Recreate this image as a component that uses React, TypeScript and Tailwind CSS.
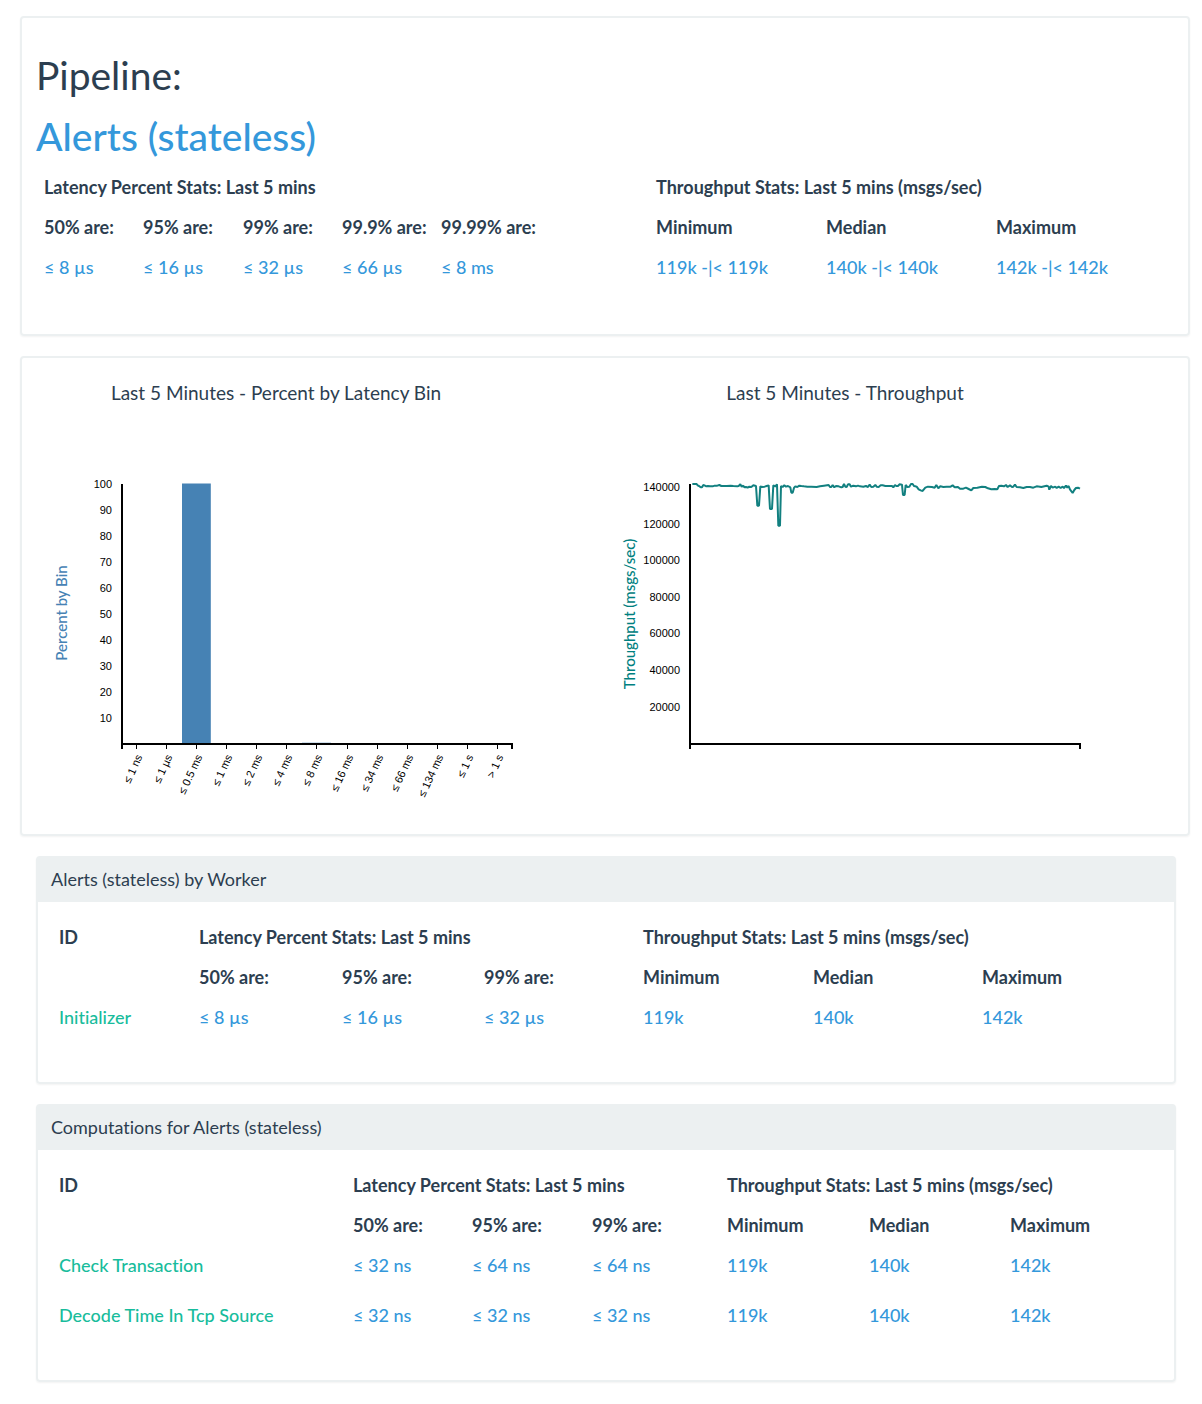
import React from "react";

type Row = { id?: string; values: string[] };

const workerCols = ["w-[140px]", "w-[143px]", "w-[142px]", "w-[159px]", "w-[170px]", "w-[169px]", "w-[187px]"];
const computationCols = ["w-[294px]", "w-[119px]", "w-[120px]", "w-[135px]", "w-[142px]", "w-[141px]", "w-[159px]"];
const pipelineCols = ["w-[99px]", "w-[100px]", "w-[99px]", "w-[99px]", "w-[215px]", "w-[170px]", "w-[170px]", "w-[186px]"];

function StatsTable({
  cols,
  latency,
  rows,
  withId = false,
}: {
  cols: string[];
  latency: string[];
  rows: Row[];
  withId?: boolean;
}) {
  return (
    <table className="w-full table-fixed text-left text-[18px] whitespace-nowrap">
      <colgroup>
        {cols.map((c, i) => (
          <col key={i} className={c} />
        ))}
      </colgroup>
      <thead>
        <tr className="h-10">
          {withId && <th className="px-2 font-bold">ID</th>}
          <th colSpan={latency.length} className="px-2 font-bold">
            Latency Percent Stats: Last 5 mins
          </th>
          <th colSpan={3} className="px-2 font-bold">
            Throughput Stats: Last 5 mins (msgs/sec)
          </th>
        </tr>
        <tr className="h-10">
          {withId && <td />}
          {[...latency, "Minimum", "Median", "Maximum"].map((h) => (
            <th key={h} className="px-2 font-bold">
              {h}
            </th>
          ))}
        </tr>
      </thead>
      <tbody>
        {rows.map((r, i) => (
          <tr key={i} className="h-[50px]">
            {r.id && (
              <td className="px-2 pt-2 align-top leading-6">
                <a href="#" className="font-medium text-[#18bc9c]">
                  {r.id}
                </a>
              </td>
            )}
            {r.values.map((v, j) => (
              <td key={j} className="px-2 pt-2 align-top leading-6 font-medium text-[#3498db]">
                {v}
              </td>
            ))}
          </tr>
        ))}
      </tbody>
    </table>
  );
}

function Panel({ title, children }: { title: string; children: React.ReactNode }) {
  return (
    <section className="mr-3.5 ml-4 rounded-sm border-2 border-[#ecf0f1] shadow-xs">
      <h2 className="h-11 bg-[#ecf0f1] px-[13px] pt-[9px] text-[18px] leading-6">{title}</h2>
      <div className="px-[13px] pt-[15px] pb-[35px]">{children}</div>
    </section>
  );
}

const bins = ["≤ 1 ns", "≤ 1 µs", "≤ 0.5 ms", "≤ 1 ms", "≤ 2 ms", "≤ 4 ms", "≤ 8 ms", "≤ 16 ms", "≤ 34 ms", "≤ 66 ms", "≤ 134 ms", "≤ 1 s", "> 1 s"];
const percents = [100, 90, 80, 70, 60, 50, 40, 30, 20, 10];
const rates = [140000, 120000, 100000, 80000, 60000, 40000, 20000];
const TICK = "fill-black font-['Liberation_Sans',Arial,sans-serif] text-[11px]";

function LatencyChart() {
  return (
    <svg width="480" height="350" className="block" role="img" aria-label="Percent by latency bin">
      <text
        transform="translate(31 143) rotate(-90)"
        textAnchor="middle"
        className="fill-[#4682b4] text-[15px] font-medium"
      >
        Percent by Bin
      </text>
      {percents.map((p, i) => (
        <text key={p} x="76" y={18 + i * 26} textAnchor="end" className={TICK}>
          {p}
        </text>
      ))}
      <rect x="146" y="13.5" width="28.8" height="260" fill="#4682b4" />
      <rect x="266" y="272.5" width="29" height="1" fill="#4682b4" opacity="0.5" />
      <path d="M86 14V279M85 274H477M476 273V279" stroke="#000" strokeWidth="2" fill="none" />
      {bins.map((b, i) => (
        <g key={b} transform={`translate(${100.5 + Math.round(i * 30.08)} 274)`}>
          <path d="M0 0V5" stroke="#000" />
          <text transform="rotate(-65)" x="-9" y="11" textAnchor="end" className={TICK}>
            {b}
          </text>
        </g>
      ))}
    </svg>
  );
}

const trace =
  "37,42 50,42 53,46 57,48 62,52 66,52 70,45 75,47 79,49 84,48 90,49 98,49 104,47 112,47 118,45 124,48 140,48 152,47 160,48 172,49 176,48 181,43 185,50 190,47 193,52 198,51 203,53 208,50 214,51 220,46 228,48 232,107 237,107 241,49 246,51 254,50 260,48 266,46 270,117 276,117 280,46 286,49 291,43 295,167 300,167 303,48 308,51 313,46 318,50 324,48 331,52 334,68 338,68 342,54 346,49 352,51 358,47 364,48 372,49 382,50 394,50 410,51 420,49 432,47 446,45 450,51 454,51 458,45 463,52 468,48 476,49 484,52 488,51 492,42 496,50 500,51 504,43 509,43 513,50 520,47 528,49 534,47 540,49 550,50 558,48 564,51 569,44 574,51 580,50 586,45 590,50 596,51 602,46 608,46 616,48 624,48 636,48 640,52 645,45 649,48 654,48 659,43 666,44 669,75 674,75 677,45 682,51 688,50 693,42 698,42 702,48 706,49 710,50 716,58 722,61 728,63 736,53 744,50 756,51 764,53 769,45 775,55 781,49 790,51 800,50 812,50 818,46 824,52 834,51 840,56 850,56 858,53 866,57 874,61 880,54 892,53 906,50 916,51 924,55 934,58 944,57 952,58 957,48 964,47 972,49 978,45 983,51 990,46 996,51 1000,50 1005,44 1010,51 1020,52 1030,54 1040,51 1050,51 1060,53 1070,49 1080,50 1084,51 1100,47 1106,50 1108,59 1113,48 1118,53 1126,50 1130,54 1136,50 1142,54 1148,50 1152,54 1158,47 1162,53 1166,48 1170,58 1178,69 1183,60 1188,54 1194,53 1200,56";

function ThroughputChart() {
  return (
    <svg width="480" height="350" className="block" role="img" aria-label="Throughput over the last 5 minutes">
      <text
        transform="translate(30 144) rotate(-90)"
        textAnchor="middle"
        className="fill-[#008080] text-[15px] font-medium"
      >
        Throughput (msgs/sec)
      </text>
      {rates.map((r, i) => (
        <text key={r} x="75" y={Math.round(21 + i * 36.6)} textAnchor="end" className={TICK}>
          {r}
        </text>
      ))}
      <path d="M85 14V279M84 274H476M475 273V279" stroke="#000" strokeWidth="2" fill="none" />
      <polyline
        points={trace}
        transform="translate(75 0) scale(0.3333)"
        fill="none"
        stroke="#128080"
        strokeWidth="6"
        strokeLinejoin="bevel"
      />
    </svg>
  );
}

function ChartBlock({ title, children }: { title: string; children: React.ReactNode }) {
  return (
    <div className="w-[480px]">
      <h3 className="mb-[65px] text-center text-[19px] leading-6">{title}</h3>
      {children}
    </div>
  );
}

export default function App() {
  return (
    <main className="flex flex-col gap-5 bg-white pt-4 pr-3 pb-5 pl-5 font-['Lato',sans-serif] leading-6 text-[#2c3e50] [font-variant-ligatures:none]">
      <section className="rounded-sm border-2 border-[#ecf0f1] px-3.5 pt-[27px] pb-[37px] shadow-xs">
        <h1 className="text-[39px] leading-[61px]">
          Pipeline:
          <br />
          <a href="#" className="font-medium text-[#3498db]">
            Alerts (stateless)
          </a>
        </h1>
        <StatsTable
          cols={pipelineCols}
          latency={["50% are:", "95% are:", "99% are:", "99.9% are:", "99.99% are:"]}
          rows={[
            {
              values: ["≤ 8 µs", "≤ 16 µs", "≤ 32 µs", "≤ 66 µs", "≤ 8 ms", "119k -|< 119k", "140k -|< 140k", "142k -|< 142k"],
            },
          ]}
        />
      </section>

      <section className="grid grid-cols-2 rounded-sm border-2 border-[#ecf0f1] px-3.5 pt-[23px] pb-3.5 shadow-xs">
        <ChartBlock title="Last 5 Minutes - Percent by Latency Bin">
          <LatencyChart />
        </ChartBlock>
        <ChartBlock title="Last 5 Minutes - Throughput">
          <ThroughputChart />
        </ChartBlock>
      </section>

      <Panel title="Alerts (stateless) by Worker">
        <StatsTable
          withId
          cols={workerCols}
          latency={["50% are:", "95% are:", "99% are:"]}
          rows={[{ id: "Initializer", values: ["≤ 8 µs", "≤ 16 µs", "≤ 32 µs", "119k", "140k", "142k"] }]}
        />
      </Panel>

      <Panel title="Computations for Alerts (stateless)">
        <StatsTable
          withId
          cols={computationCols}
          latency={["50% are:", "95% are:", "99% are:"]}
          rows={[
            { id: "Check Transaction", values: ["≤ 32 ns", "≤ 64 ns", "≤ 64 ns", "119k", "140k", "142k"] },
            { id: "Decode Time In Tcp Source", values: ["≤ 32 ns", "≤ 32 ns", "≤ 32 ns", "119k", "140k", "142k"] },
          ]}
        />
      </Panel>
    </main>
  );
}
